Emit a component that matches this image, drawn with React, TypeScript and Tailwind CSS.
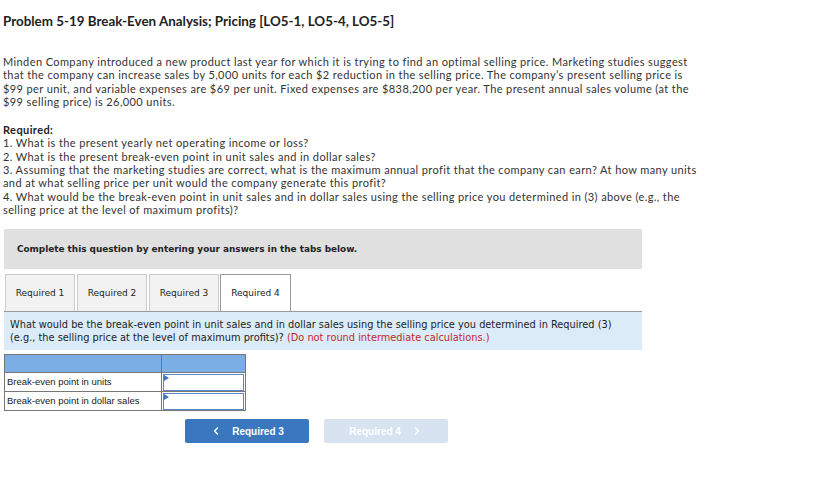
import { ChevronLeft, ChevronRight } from 'lucide-react';

const body = '"Lato", "Open Sans", sans-serif';
const verdana = '"DejaVu Sans", Verdana, sans-serif';

const tabs = ['Required 1', 'Required 2', 'Required 3', 'Required 4'];

export default function App() {
  return (
    <div className="w-[819px] h-[491px] bg-white text-[#333]" style={{ fontFamily: body }}>
      <div className="px-[3px] pt-[13px]">
        <h1 className="text-[13.4px] font-bold leading-[16px] text-[#222]">
          Problem 5-19 Break-Even Analysis; Pricing [LO5-1, LO5-4, LO5-5]
        </h1>

        <p className="mt-[26px] text-[11px] tracking-[0.4px] leading-[13.3px] whitespace-nowrap">
          Minden Company introduced a new product last year for which it is trying to find an optimal selling price. Marketing studies suggest
          <br />
          that the company can increase sales by 5,000 units for each $2 reduction in the selling price. The company&rsquo;s present selling price is
          <br />
          $99 per unit, and variable expenses are $69 per unit. Fixed expenses are $838,200 per year. The present annual sales volume (at the
          <br />
          $99 selling price) is 26,000 units.
        </p>

        <div className="mt-[15px] text-[11px] tracking-[0.4px] leading-[13.3px] whitespace-nowrap">
          <div className="font-bold text-[#222]">Required:</div>
          <div>1. What is the present yearly net operating income or loss?</div>
          <div>2. What is the present break-even point in unit sales and in dollar sales?</div>
          <div>
            3. Assuming that the marketing studies are correct, what is the maximum annual profit that the company can earn? At how many units
            <br />
            and at what selling price per unit would the company generate this profit?
          </div>
          <div>
            4. What would be the break-even point in unit sales and in dollar sales using the selling price you determined in (3) above (e.g., the
            <br />
            selling price at the level of maximum profits)?
          </div>
        </div>
      </div>

      <div className="ml-[4px] w-[638px]" style={{ fontFamily: verdana }}>
        <div className="mt-[13px] h-[40px] bg-[#e0e0e0] flex items-center pl-[13px] text-[8.9px] font-bold text-[#222]">
          Complete this question by entering your answers in the tabs below.
        </div>

        <div className="mt-[5px] flex items-end h-[37px] pl-[1px]">
          {tabs.map((t, i) => {
            const active = i === 3;
            return (
              <div
                key={t}
                className={
                  active
                    ? 'ml-[-1px] w-[71px] h-[37px] bg-white border border-b-0 border-[#999] flex items-center justify-center text-[9px] text-[#222]'
                    : 'mr-[2px] w-[70px] h-[37px] bg-[#f2f2f2] border border-b-0 border-[#ccc] flex items-center justify-center text-[9px] text-[#222]'
                }
              >
                {t}
              </div>
            );
          })}
        </div>

        <div className="h-[39px] bg-[#dbecf8] border-t border-[#999] pl-[6px] pt-[6px] text-[9.8px] leading-[13px] text-[#222] whitespace-nowrap">
          What would be the break-even point in unit sales and in dollar sales using the selling price you determined in Required (3)
          <br />
          (e.g., the selling price at the level of maximum profits)? <span className="text-[#c6262e]">(Do not round intermediate calculations.)</span>
        </div>
      </div>

      <table
        className="ml-[4px] mt-[4px] border-collapse text-[9.5px] text-[#222]"
        style={{ fontFamily: '"Liberation Sans", Arial, sans-serif' }}
      >
        <tbody>
          <tr className="h-[18px] bg-[#7aaee4]">
            <td className="w-[157px] border border-[#777]"></td>
            <td className="w-[84px] border border-[#777]"></td>
          </tr>
          {['Break-even point in units', 'Break-even point in dollar sales'].map((label) => (
            <tr key={label} className="h-[19px]">
              <td className="border border-[#777] pl-[2px]">{label}</td>
              <td className="border border-[#777] p-0 bg-white">
                <div className="relative h-[17px] border border-[#5d87c4] mx-[1px]">
                  <span className="absolute left-0 top-0 w-0 h-0 border-t-[3px] border-b-[3px] border-l-[5px] border-t-transparent border-b-transparent border-l-[#3a77bf]" />
                </div>
              </td>
            </tr>
          ))}
        </tbody>
      </table>

      <div className="ml-[185px] mt-[8px] flex gap-[15px]" style={{ fontFamily: '"Liberation Sans", Arial, sans-serif' }}>
        <div className="w-[124px] h-[24px] bg-[#3a77bf] rounded-[2px] flex items-center justify-center gap-[10px] text-white text-[10px] font-bold">
          <ChevronLeft size={12} strokeWidth={3} />
          <span>Required 3</span>
        </div>
        <div className="w-[124px] h-[24px] bg-[#d7e3f0] rounded-[2px] flex items-center justify-center gap-[10px] text-white text-[10px] font-bold">
          <span>Required 4</span>
          <ChevronRight size={12} strokeWidth={3} />
        </div>
      </div>
    </div>
  );
}
